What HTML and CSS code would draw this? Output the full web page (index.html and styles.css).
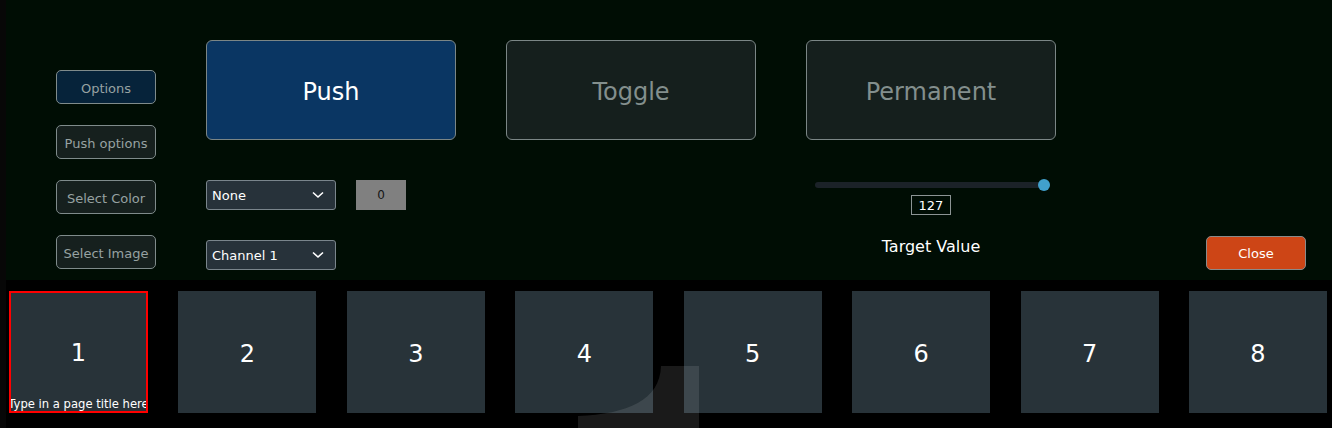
FILE: index.html
```html
<!DOCTYPE html>
<html lang="en">
  <head>
    <meta charset="UTF-8" />
    <meta name="viewport" content="width=device-width, initial-scale=1.0" />
    <title>Button Editor</title>

    <link rel="stylesheet" href="styles.css">
  </head>
  <body>
    <div class="editor">
      <div class="side">
        <button class="side-btn active">Options</button>
        <button class="side-btn">Push options</button>
        <button class="side-btn">Select Color</button>
        <button class="side-btn">Select Image</button>
      </div>

      <div class="mode-col">
        <button class="mode-btn active">Push</button>
        <div class="controls">
          <div class="row">
            <div class="select">
              <span>None</span>
              <svg width="12" height="8" viewBox="0 0 12 8"><polyline points="1,1.5 6,6 11,1.5" fill="none" stroke="#fff" stroke-width="1.6"/></svg>
            </div>
            <div class="num-box">0</div>
          </div>
          <div class="select">
            <span>Channel 1</span>
            <svg width="12" height="8" viewBox="0 0 12 8"><polyline points="1,1.5 6,6 11,1.5" fill="none" stroke="#fff" stroke-width="1.6"/></svg>
          </div>
        </div>
      </div>

      <div class="mode-col">
        <button class="mode-btn">Toggle</button>
      </div>

      <div class="mode-col">
        <button class="mode-btn">Permanent</button>
        <div class="target">
          <div class="slider">
            <div class="track"></div>
            <div class="thumb"></div>
          </div>
          <div class="value-box">127</div>
          <div class="target-label">Target Value</div>
        </div>
      </div>

      <button class="close-btn">Close</button>
    </div>

    <div class="pages">
      <div class="page selected">
        <span class="page-num">1</span>
        <span class="page-title">Type in a page title here</span>
      </div>
      <div class="page"><span class="page-num">2</span></div>
      <div class="page"><span class="page-num">3</span></div>
      <div class="page"><span class="page-num">4</span></div>
      <div class="page"><span class="page-num">5</span></div>
      <div class="page"><span class="page-num">6</span></div>
      <div class="page"><span class="page-num">7</span></div>
      <div class="page"><span class="page-num">8</span></div>
    </div>

    <svg class="watermark" width="1332" height="428" viewBox="0 0 1332 428">
      <path d="M578 428 V416 C628 414 660 400 661 366 H699 V428 Z" fill="#fff" fill-opacity="0.1"/>
    </svg>
  </body>
</html>
```

FILE: styles.css
```css
body {
  font-family: "DejaVu Sans", Verdana, sans-serif;
  background-color: #000;
  margin: 0;
  padding: 0;
  width: 1332px;
  height: 428px;
  overflow: hidden;
  position: relative;
  border-left: 6px solid #070707;
  box-sizing: border-box;
}

button {
  font-family: inherit;
  cursor: pointer;
}

.editor {
  display: flex;
  align-items: flex-start;
  height: 280px;
  box-sizing: border-box;
  padding: 40px 26px 10px 50px;
  background-color: #000d04;
}

.side {
  display: flex;
  flex-direction: column;
  gap: 21px;
  margin-top: 30px;
  width: 100px;
}

.side-btn {
  height: 34px;
  padding: 2px 0 0;
  background-color: #16201e;
  color: #97a2a2;
  font-size: 13px;
  border: 1px solid #7f8b8b;
  border-radius: 5px;
}

.side-btn.active {
  background-color: #06233a;
}

.mode-col {
  width: 250px;
  margin-left: 50px;
}

.mode-btn {
  display: block;
  width: 250px;
  height: 100px;
  padding: 4px 0 0;
  background-color: #151f1d;
  color: #838f8d;
  font-size: 24px;
  border: 1px solid #7b8686;
  border-radius: 6px;
}

.mode-btn.active {
  background-color: #0a3663;
  color: #fff;
}

.controls {
  display: flex;
  flex-direction: column;
  gap: 30px;
  margin-top: 40px;
}

.row {
  display: flex;
  gap: 20px;
}

.select {
  display: flex;
  align-items: center;
  justify-content: space-between;
  width: 130px;
  height: 30px;
  box-sizing: border-box;
  padding: 0 11px 0 5px;
  background-color: #27323a;
  border: 1px solid #7a858c;
  border-radius: 3px;
  color: #fff;
  font-size: 13px;
}

.num-box {
  width: 50px;
  height: 30px;
  line-height: 30px;
  text-align: center;
  background-color: #808080;
  color: #151515;
  font-size: 12px;
}

.target {
  display: flex;
  flex-direction: column;
  align-items: center;
  margin-top: 39px;
}

.slider {
  position: relative;
  width: 235px;
  height: 12px;
  margin-left: 3px;
}

.track {
  margin-top: 3px;
  height: 6px;
  border-radius: 3px;
  background-color: #1b2228;
}

.thumb {
  position: absolute;
  right: 0;
  top: 0;
  width: 12px;
  height: 12px;
  border-radius: 50%;
  background-color: #41a0cc;
}

.value-box {
  margin-top: 4px;
  width: 40px;
  height: 20px;
  box-sizing: border-box;
  border: 1px solid #8c9494;
  line-height: 19px;
  text-align: center;
  color: #fff;
  font-size: 13px;
}

.target-label {
  margin-top: 22px;
  color: #fff;
  font-size: 16px;
}

.close-btn {
  align-self: flex-end;
  margin-left: auto;
  width: 100px;
  height: 34px;
  padding: 1px 0 0;
  background-color: #cd4516;
  color: #fff;
  font-size: 13px;
  border: 1px solid #8a8a8a;
  border-radius: 5px;
}

.pages {
  display: flex;
  justify-content: space-between;
  padding: 11px 5px 0 3px;
}

.page {
  position: relative;
  display: flex;
  align-items: center;
  justify-content: center;
  width: 138px;
  height: 122px;
  box-sizing: border-box;
  padding-top: 4px;
  background-color: #283339;
  overflow: hidden;
}

.page.selected {
  width: 139px;
  border: 2px solid #ff0000;
  padding-top: 2px;
}

.page-num {
  color: #fff;
  font-size: 24px;
}

.page-title {
  position: absolute;
  left: 50%;
  bottom: 0;
  transform: translateX(-50%);
  white-space: nowrap;
  color: #fff;
  font-size: 11.6px;
}

.watermark {
  position: absolute;
  top: 0;
  left: -6px;
  pointer-events: none;
}
```
